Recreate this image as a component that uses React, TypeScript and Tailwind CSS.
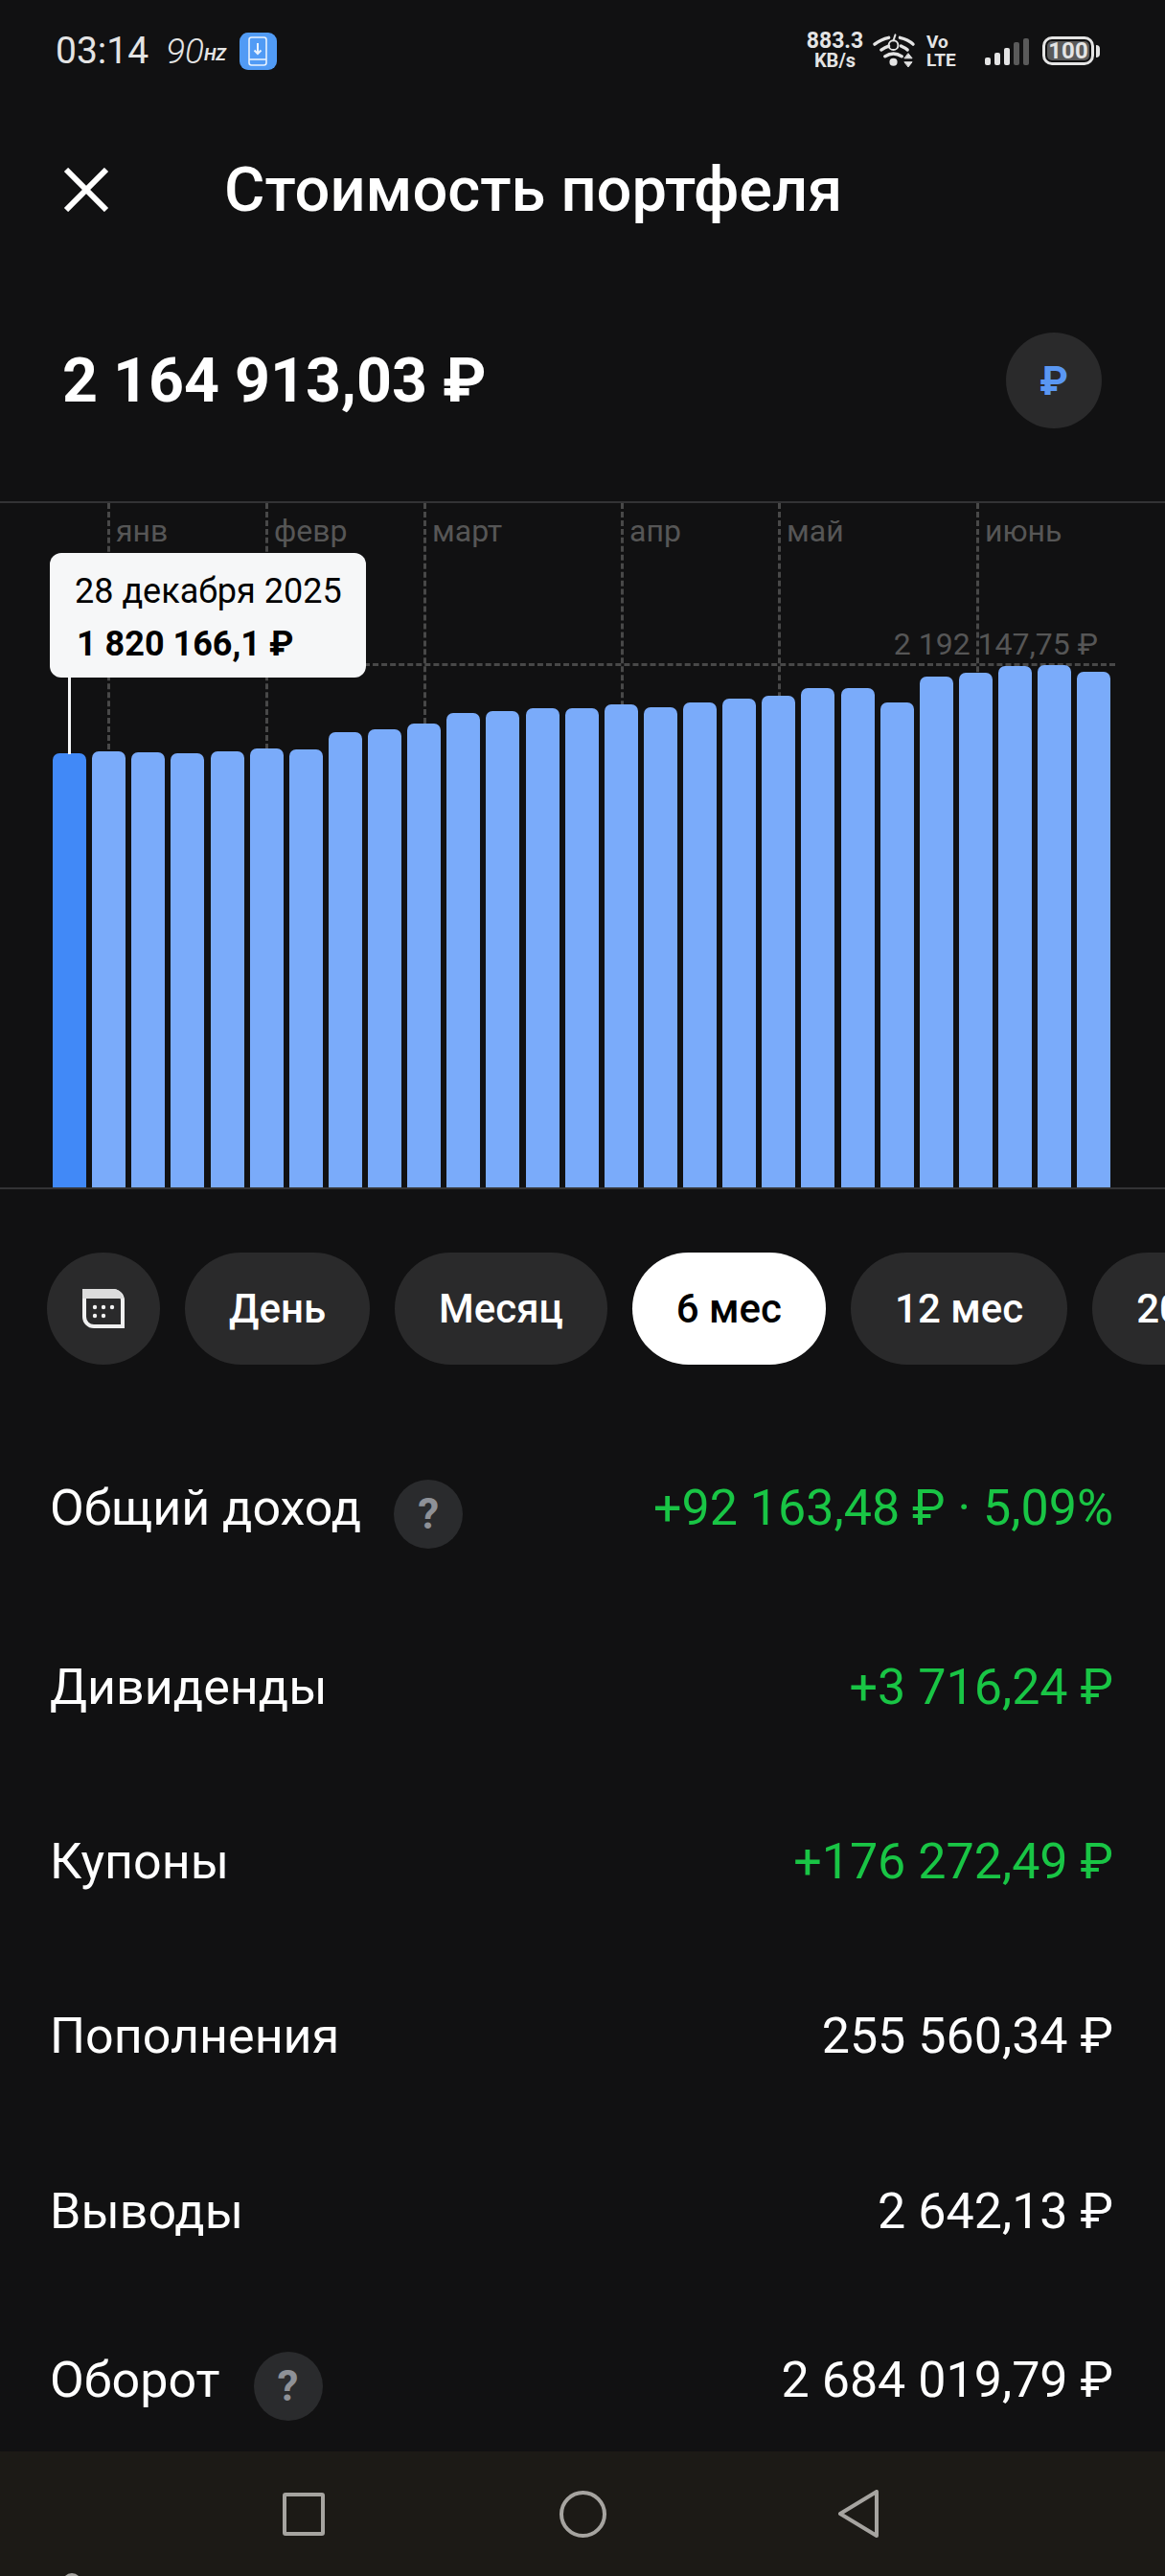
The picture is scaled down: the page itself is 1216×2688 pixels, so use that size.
const bars = [786, 784, 785, 786, 784, 781, 782, 764, 761, 755, 744, 742, 739, 739, 735, 738, 733, 729, 726, 718, 718, 733, 706, 702, 695, 694, 701];

const months = [
  { x: 112, label: "янв" },
  { x: 277, label: "февр" },
  { x: 442, label: "март" },
  { x: 648, label: "апр" },
  { x: 812, label: "май" },
  { x: 1019, label: "июнь" },
];

const rows = [
  { label: "Дивиденды", value: "+3 716,24 ₽", green: true, h: "h-[182px]" },
  { label: "Купоны", value: "+176 272,49 ₽", green: true, h: "h-[182px]" },
  { label: "Пополнения", value: "255 560,34 ₽", green: false, h: "h-[182px]" },
  { label: "Выводы", value: "2 642,13 ₽", green: false, h: "h-[183px]" },
];

function StatusBar() {
  return (
    <div className="flex h-[110px] items-center justify-between pb-[4px] pl-[58px] pr-[68px] text-[#e4e4e4]">
      <div className="flex items-center">
        <span className="text-[39px] leading-none">03:14</span>
        <span className="ml-[18px] text-[37px] font-light italic leading-none">90</span>
        <span className="mt-[8px] text-[18px] font-bold italic leading-none">HZ</span>
        <span className="ml-[14px] flex h-[39px] w-[39px] items-center justify-center rounded-[9px] bg-[#519bf5]">
          <svg width="20" height="31" viewBox="0 0 20 31" fill="none" stroke="#e8f2fe" strokeWidth="1.6">
            <rect x="1" y="1" width="18" height="29" rx="2.5" />
            <path d="M1 24h18" />
            <path d="M10 7v11M6.5 14.5 10 18l3.500-3.500" strokeWidth="2" />
          </svg>
        </span>
      </div>
      <div className="flex items-center">
        <div className="flex w-[57px] flex-col items-center font-bold leading-[20px]">
          <span className="text-[23px]">883.3</span>
          <span className="text-[20px]">KB/s</span>
        </div>
        <svg className="ml-[11px]" width="45" height="36" viewBox="0 0 46 36" fill="none" stroke="#e4e4e4" strokeWidth="3.4" strokeLinecap="round">
          <path d="M2 11C7 7 12 5 17 4" />
          <path d="M29 4c5 1 10 3 14 7" />
          <path d="M9 17c3-2 5-3 8-4" />
          <path d="M30 13c2 1 5 2 7 4" />
          <path d="M13 24c6-4 12-4 18 0" />
          <circle cx="22" cy="12" r="5" strokeWidth="2" />
          <path d="M22 7 24 1" strokeWidth="2" />
          <circle cx="22" cy="30" r="2.500" fill="#e4e4e4" />
          <path d="M38 21 42 26H34Z" fill="#e4e4e4" strokeWidth="1" />
          <path d="M38 35 42 30H34Z" fill="#e4e4e4" strokeWidth="1" />
        </svg>
        <div className="ml-[11px] flex w-[33px] flex-col text-[19px] font-bold leading-[19px]">
          <span>Vo</span>
          <span>LTE</span>
        </div>
        <div className="ml-[28px] flex h-[30px] items-end gap-[4px]">
          <span className="h-[8px] w-[6px] rounded-[2px] bg-[#e4e4e4]" />
          <span className="h-[13px] w-[6px] rounded-[2px] bg-[#e4e4e4]" />
          <span className="h-[18px] w-[6px] rounded-[2px] bg-[#e4e4e4]" />
          <span className="h-[24px] w-[6px] rounded-[2px] bg-[#5a5a5a]" />
          <span className="h-[28px] w-[6px] rounded-[2px] bg-[#5a5a5a]" />
        </div>
        <div className="ml-[14px] flex h-[30px] w-[54px] items-center justify-center rounded-[10px] border-[3px] border-[#e4e4e4] bg-[#5a5a5a] bg-clip-content p-[2px] text-[24px] font-bold leading-none">
          100
        </div>
        <span className="ml-[2px] h-[13px] w-[4px] rounded-r bg-[#e4e4e4]" />
      </div>
    </div>
  );
}

function Chart() {
  return (
    <div className="relative h-[718px] border-y-2 border-[#333335]">
      {months.map((m) => (
        <div key={m.label}>
          <div
            className="absolute top-0 bottom-0 border-l-[3px] border-dashed border-[#484848]"
            style={{ left: m.x }}
          />
          <span
            className="absolute top-[10px] text-[32px] leading-[38px] text-[#565656]"
            style={{ left: m.x + 9 }}
          >
            {m.label}
          </span>
        </div>
      ))}
      <div className="absolute left-[380px] right-[52px] top-[167px] border-t-[3px] border-dashed border-[#484848]" />
      <span className="absolute right-[70px] top-[128px] text-[32px] leading-[38px] text-[#565656]">
        2 192 147,75 ₽
      </span>
      <div className="absolute inset-x-0 bottom-0 flex h-full items-end gap-[6.14px] pl-[55px]">
        {bars.map((top, i) => (
          <div
            key={i}
            className={`w-[35px] rounded-t-[7px] ${i === 0 ? "bg-[#4189f7]" : "bg-[#7aabfa]"}`}
            style={{ height: 1239 - top }}
          />
        ))}
      </div>
      <div className="absolute left-[71px] top-[182px] h-[80px] w-[3px] bg-[#f5f6f7]" />
      <div className="absolute left-[52px] top-[52px] h-[130px] w-[330px] rounded-[12px] bg-[#f6f7f8] pl-[26px] pt-[17px] text-black">
        <div className="text-[36px] leading-[46px]">28 декабря 2025</div>
        <div className="mt-[9px] pl-[2px] text-[36px] font-bold leading-[46px]">1 820 166,1 ₽</div>
      </div>
    </div>
  );
}

function Help() {
  return (
    <span className="flex h-[72px] w-[72px] shrink-0 items-center justify-center rounded-full bg-[#2a2b2d] text-[44px] font-bold text-[#8e9197]">
      ?
    </span>
  );
}

function Chip({ label, active }: { label: string; active?: boolean }) {
  return (
    <div
      className={`flex h-[117px] shrink-0 items-center rounded-full px-[46px] text-[42px] font-medium ${
        active ? "bg-white text-black" : "bg-[#2a2a2b] text-white"
      }`}
    >
      {label}
    </div>
  );
}

export default function App() {
  return (
    <div className="h-[2688px] w-[1216px] overflow-hidden bg-[#111112] font-['Roboto',sans-serif] text-white">
      <StatusBar />
      <div className="flex h-[176px] items-center pl-[66px]">
        <svg width="48" height="46" viewBox="0 0 48 46" stroke="#fff" strokeWidth="6" fill="none">
          <path d="M3 2 45 44M45 2 3 44" />
        </svg>
        <h1 className="ml-[120px] text-[65px] font-medium leading-none">Стоимость портфеля</h1>
      </div>
      <div className="flex h-[237px] items-start justify-between pl-[65px] pr-[66px] pt-[61px]">
        <span className="text-[64.5px] font-bold leading-[100px]">2 164 913,03 ₽</span>
        <span className="flex h-[100px] w-[100px] items-center justify-center rounded-full bg-[#2a2a2b] text-[42px] font-bold text-[#5a97f2]">
          ₽
        </span>
      </div>
      <Chart />
      <div className="ml-[49px] mt-[66px] flex gap-[26px] overflow-hidden">
        <div className="flex h-[117px] w-[118px] shrink-0 items-center justify-center rounded-full bg-[#2a2a2b]">
          <svg width="44" height="41" viewBox="0 0 44 41" fill="none">
            <path d="M2 2H32a10 10 0 0 1 10 10V39H12A10 10 0 0 1 2 29Z" stroke="#f0f0f0" strokeWidth="4" />
            <path d="M2 2H32a8 8 0 0 1 8 6H2Z" fill="#dcdcdc" stroke="#dcdcdc" strokeWidth="4" />
            <g fill="#f2f2f2">
              <circle cx="13" cy="19" r="2.200" />
              <circle cx="22" cy="19" r="2.200" />
              <circle cx="31" cy="19" r="2.200" />
              <circle cx="13" cy="28" r="2.200" />
              <circle cx="22" cy="28" r="2.200" />
            </g>
          </svg>
        </div>
        <Chip label="День" />
        <Chip label="Месяц" />
        <Chip label="6 мес" active />
        <Chip label="12 мес" />
        <Chip label="2025" />
      </div>
      <div className="mt-[60px] pl-[52px] pr-[54px] text-[52px] leading-[60px]">
        <div className="flex h-[186px] items-start justify-between pt-[60px]">
          <div className="flex items-start">
            <span>Общий доход</span>
            <span className="ml-[34px]">
              <Help />
            </span>
          </div>
          <span className="text-[#19c545]">+92 163,48 ₽ · 5,09%</span>
        </div>
        {rows.map((r) => (
          <div key={r.label} className={`flex items-center justify-between ${r.h}`}>
            <span>{r.label}</span>
            <span className={r.green ? "text-[#19c545]" : ""}>{r.value}</span>
          </div>
        ))}
        <div className="flex h-[159px] items-start justify-between pt-[55px]">
          <div className="flex items-start">
            <span>Оборот</span>
            <span className="ml-[35px]">
              <Help />
            </span>
          </div>
          <span>2 684 019,79 ₽</span>
        </div>
      </div>
      <div className="relative flex h-[130px] items-center overflow-hidden bg-[#1c1a16] pl-[295px]">
        <div className="h-[45px] w-[44px] rounded-[3px] border-[4px] border-[#a6a4a0]" />
        <div className="ml-[245px] h-[49px] w-[49px] rounded-full border-[4px] border-[#a6a4a0]" />
        <svg className="ml-[242px]" width="42" height="50" viewBox="0 0 42 50" fill="none" stroke="#a6a4a0" strokeWidth="4" strokeLinejoin="round">
          <path d="M40 2v46L2 25Z" />
        </svg>
        <span className="absolute left-[65px] top-[127px] h-[20px] w-[20px] rounded-full bg-[#a6a4a0]" />
      </div>
    </div>
  );
}
